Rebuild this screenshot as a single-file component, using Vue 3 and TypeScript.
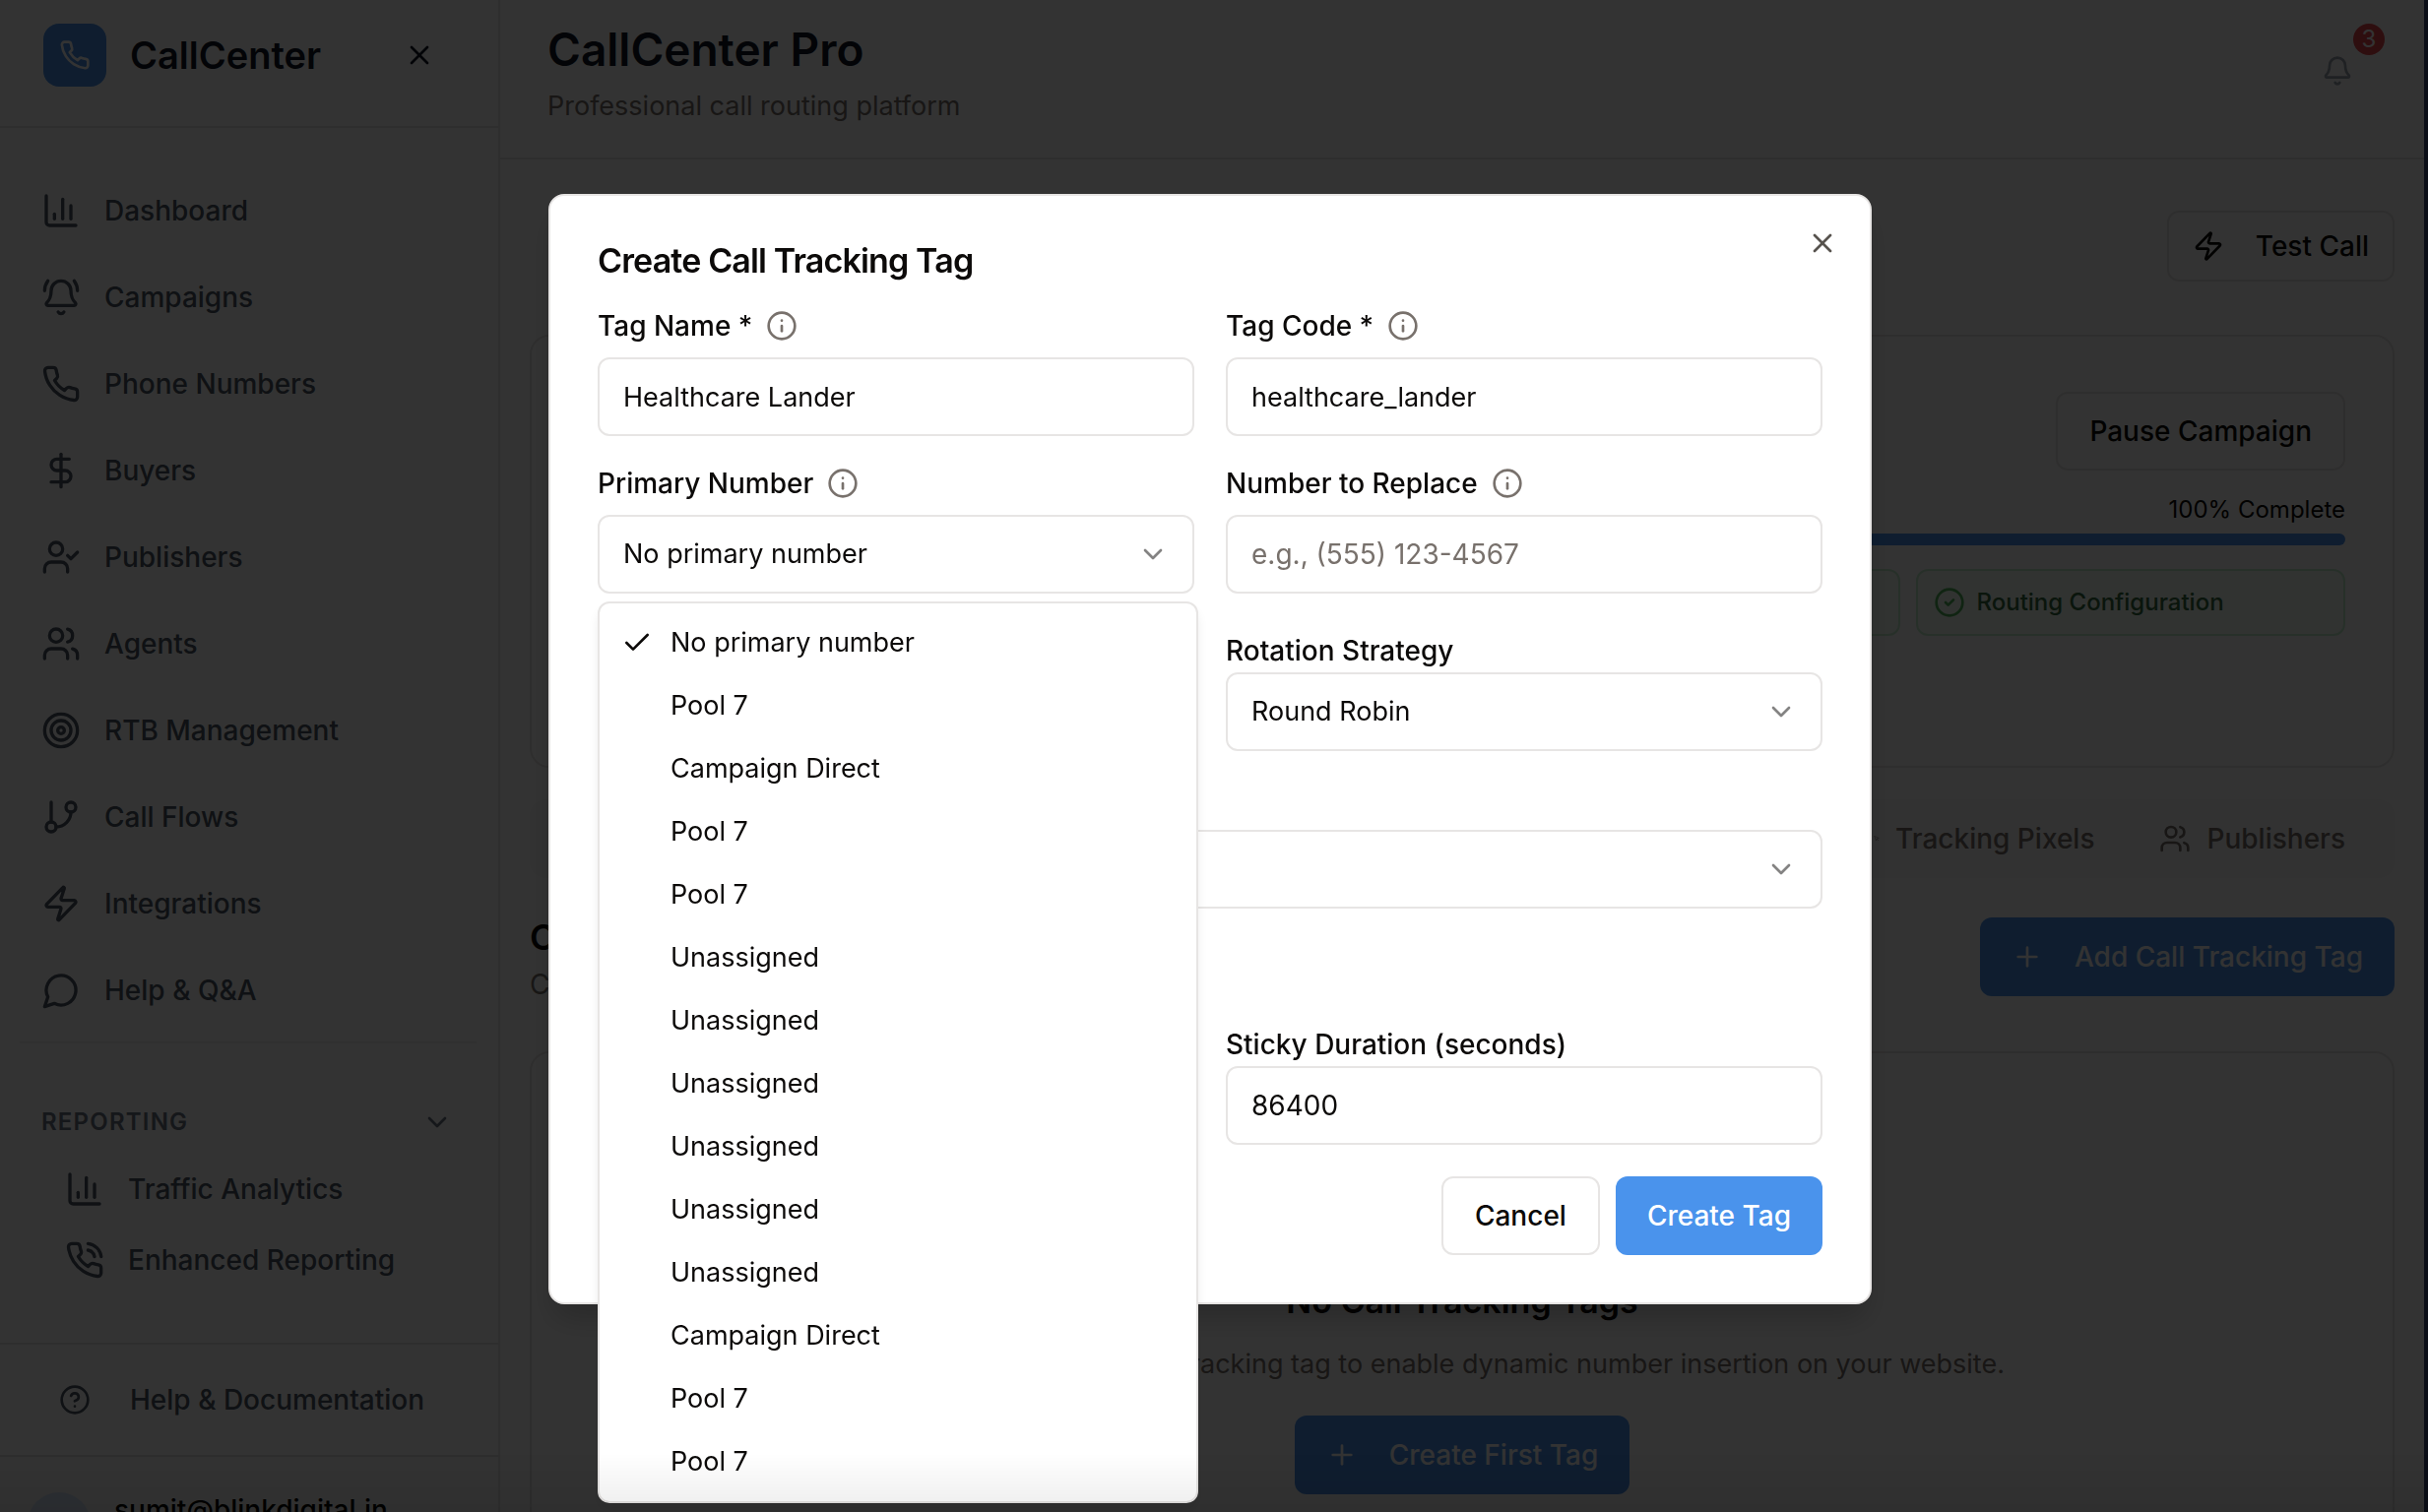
<script setup lang="ts">
import { h, ref, type FunctionalComponent } from 'vue'

type Shape = [tag: string, attrs: Record<string, string>]

const p = (d: string): Shape => ['path', { d }]
const c = (cx: number, cy: number, r: number): Shape => [
  'circle',
  { cx: String(cx), cy: String(cy), r: String(r) },
]

const handset =
  'M22 16.92v3a2 2 0 0 1-2.18 2 19.79 19.79 0 0 1-8.63-3.07 19.5 19.5 0 0 1-6-6 19.79 19.79 0 0 1-3.07-8.67A2 2 0 0 1 4.11 2h3a2 2 0 0 1 2 1.72 12.84 12.84 0 0 0 .7 2.81 2 2 0 0 1-.45 2.11L8.09 9.91a16 16 0 0 0 6 6l1.27-1.27a2 2 0 0 1 2.11-.45 12.84 12.84 0 0 0 2.81.7A2 2 0 0 1 22 16.92z'
const bellBody =
  'M3.262 15.326A1 1 0 0 0 4 17h16a1 1 0 0 0 .74-1.673C19.41 13.956 18 12.499 18 8A6 6 0 0 0 6 8c0 4.499-1.411 5.956-2.738 7.326'
const bellClapper = 'M10.268 21a2 2 0 0 0 3.464 0'

const icons: Record<string, Shape[]> = {
  phone: [p(handset)],
  phoneCall: [p(handset), p('M14.05 2a9 9 0 0 1 8 7.94'), p('M14.05 6A5 5 0 0 1 18 10')],
  close: [p('M18 6 6 18'), p('m6 6 12 12')],
  chart: [p('M3 3v16a2 2 0 0 0 2 2h16'), p('M18 17V9'), p('M13 17V5'), p('M8 17v-3')],
  bell: [p(bellBody), p(bellClapper)],
  bellRing: [p(bellBody), p(bellClapper), p('M22 8c0-2.3-.8-4.3-2-6'), p('M4 2C2.8 3.7 2 5.7 2 8')],
  dollar: [p('M12 2v20'), p('M17 5H9.5a3.5 3.5 0 0 0 0 7h5a3.5 3.5 0 0 1 0 7H6')],
  userCheck: [p('m16 11 2 2 4-4'), p('M16 21v-2a4 4 0 0 0-4-4H6a4 4 0 0 0-4 4v2'), c(9, 7, 4)],
  users: [
    p('M16 21v-2a4 4 0 0 0-4-4H6a4 4 0 0 0-4 4v2'),
    c(9, 7, 4),
    p('M22 21v-2a4 4 0 0 0-3-3.87'),
    p('M16 3.13a4 4 0 0 1 0 7.75'),
  ],
  target: [c(12, 12, 10), c(12, 12, 6), c(12, 12, 2)],
  branch: [p('M6 3v12'), c(18, 6, 3), c(6, 18, 3), p('M18 9a9 9 0 0 1-9 9')],
  zap: [
    p('M4 14a1 1 0 0 1-.78-1.63l9.9-10.2a.5.5 0 0 1 .86.46l-1.92 6.02A1 1 0 0 0 13 10h7a1 1 0 0 1 .78 1.63l-9.9 10.2a.5.5 0 0 1-.86-.46l1.92-6.02A1 1 0 0 0 11 14z'),
  ],
  message: [p('M7.9 20A9 9 0 1 0 4 16.1L2 22Z')],
  help: [c(12, 12, 10), p('M9.09 9a3 3 0 0 1 5.83 1c0 2-3 3-3 3'), p('M12 17h.01')],
  info: [c(12, 12, 10), p('M12 16v-4'), p('M12 8h.01')],
  chevron: [p('m6 9 6 6 6-6')],
  chevronUp: [p('m18 15-6-6-6 6')],
  check: [p('M20 6 9 17l-5-5')],
  checkCircle: [c(12, 12, 10), p('m9 12 2 2 4-4')],
  plus: [p('M5 12h14'), p('M12 5v14')],
  pointer: [p('M12.6 12.6 19 19'), p('M3 3l7 17 2.5-7.5L20 10z')],
}

const Icon: FunctionalComponent<{ name: string }> = (props) =>
  h(
    'svg',
    {
      viewBox: '0 0 24 24',
      fill: 'none',
      stroke: 'currentColor',
      'stroke-width': 2,
      'stroke-linecap': 'round',
      'stroke-linejoin': 'round',
      'aria-hidden': 'true',
    },
    icons[props.name].map(([tag, attrs]) => h(tag, attrs)),
  )
Icon.props = ['name']

const navItems = [
  { icon: 'chart', label: 'Dashboard' },
  { icon: 'bellRing', label: 'Campaigns' },
  { icon: 'phone', label: 'Phone Numbers' },
  { icon: 'dollar', label: 'Buyers' },
  { icon: 'userCheck', label: 'Publishers' },
  { icon: 'users', label: 'Agents' },
  { icon: 'target', label: 'RTB Management' },
  { icon: 'branch', label: 'Call Flows' },
  { icon: 'zap', label: 'Integrations' },
  { icon: 'message', label: 'Help & Q&A' },
]
const reportItems = [
  { icon: 'chart', label: 'Traffic Analytics' },
  { icon: 'phoneCall', label: 'Enhanced Reporting' },
]
const numberOptions = [
  'No primary number',
  'Pool 7',
  'Campaign Direct',
  'Pool 7',
  'Pool 7',
  ...Array<string>(6).fill('Unassigned'),
  'Campaign Direct',
  'Pool 7',
  'Pool 7',
]

const tagName = ref('Healthcare Lander')
const tagCode = ref('healthcare_lander')
const replaceNumber = ref('')
const stickyDuration = ref('86400')
const selectedNumber = ref(0)
</script>

<template>
  <div class="app">
    <aside class="sidebar">
      <div class="brand">
        <span class="brand-logo"><Icon name="phone" class="icon" /></span>
        <span class="brand-name">CallCenter</span>
        <button class="icon-button" type="button" aria-label="Close sidebar"><Icon name="close" class="icon" /></button>
      </div>
      <nav class="nav" aria-label="Main">
        <a v-for="item in navItems" :key="item.label" href="#" class="nav-link">
          <Icon :name="item.icon" class="icon-lg" />{{ item.label }}
        </a>
      </nav>
      <section class="reports">
        <button class="reports-toggle" type="button">REPORTING<Icon name="chevron" class="icon" /></button>
        <a v-for="item in reportItems" :key="item.label" href="#" class="report-link">
          <Icon :name="item.icon" class="icon-lg" />{{ item.label }}
        </a>
      </section>
      <div class="docs">
        <a href="#" class="docs-link"><Icon name="help" class="icon" />Help &amp; Documentation</a>
      </div>
      <div class="account">
        <span class="avatar"></span>
        <span class="account-mail">sumit@blinkdigital.in</span>
        <Icon name="chevronUp" class="icon account-arrow" />
      </div>
    </aside>

    <div class="main">
      <header class="topbar">
        <div>
          <h1>CallCenter Pro</h1>
          <p>Professional call routing platform</p>
        </div>
        <button class="bell" type="button" aria-label="Notifications">
          <Icon name="bell" class="icon" />
          <span class="badge">3</span>
        </button>
      </header>

      <main class="content">
        <div class="actions">
          <button class="button outline small" type="button"><Icon name="zap" class="icon" />Test Call</button>
        </div>

        <section class="card progress-card">
          <div class="actions">
            <button class="button outline" type="button">Pause Campaign</button>
          </div>
          <p class="complete">100% Complete</p>
          <div class="bar"></div>
          <div class="steps">
            <div class="step"></div>
            <div class="step"></div>
            <div class="step"></div>
            <div class="step"><Icon name="checkCircle" class="icon" />Routing Configuration</div>
          </div>
        </section>

        <div class="tabs">
          <button class="tab" type="button"><Icon name="pointer" class="pointer" />Tracking Pixels</button>
          <button class="tab" type="button"><Icon name="users" class="icon" />Publishers</button>
        </div>

        <div class="section-head">
          <div>
            <h2>Call Tracking Tags</h2>
            <p>Configure tags</p>
          </div>
          <button class="button primary" type="button"><Icon name="plus" class="icon" />Add Call Tracking Tag</button>
        </div>

        <section class="card empty">
          <h3>No Call Tracking Tags</h3>
          <p>Create your first call tracking tag to enable dynamic number insertion on your website.</p>
          <button class="button primary" type="button"><Icon name="plus" class="icon" />Create First Tag</button>
        </section>
      </main>
    </div>

    <div class="scrim">
      <form class="dialog" role="dialog" aria-modal="true" aria-labelledby="dialog-title" @submit.prevent>
        <button class="icon-button dialog-close" type="button" aria-label="Close"><Icon name="close" class="icon" /></button>
        <h2 id="dialog-title">Create Call Tracking Tag</h2>

        <div class="fields">
          <div class="field">
            <div class="label-row"><label for="tag-name">Tag Name *</label><Icon name="info" class="icon" /></div>
            <input id="tag-name" v-model="tagName" class="control" type="text" />
          </div>
          <div class="field">
            <div class="label-row"><label for="tag-code">Tag Code *</label><Icon name="info" class="icon" /></div>
            <input id="tag-code" v-model="tagCode" class="control" type="text" />
          </div>
          <div class="field">
            <div class="label-row"><label for="primary">Primary Number</label><Icon name="info" class="icon" /></div>
            <div class="select">
              <select id="primary" v-model="selectedNumber" class="control">
                <option v-for="(name, i) in numberOptions" :key="i" :value="i">{{ name }}</option>
              </select>
              <Icon name="chevron" class="icon arrow" />
              <ul class="menu" role="listbox" aria-label="Primary Number">
                <li
                  v-for="(name, i) in numberOptions"
                  :key="i"
                  class="option"
                  role="option"
                  :aria-selected="i === selectedNumber"
                  @click="selectedNumber = i"
                >
                  <span class="mark"><Icon v-if="i === selectedNumber" name="check" class="icon" /></span>{{ name }}
                </li>
              </ul>
            </div>
          </div>
          <div class="field">
            <div class="label-row"><label for="replace">Number to Replace</label><Icon name="info" class="icon" /></div>
            <input id="replace" v-model="replaceNumber" class="control" type="text" placeholder="e.g., (555) 123-4567" />
          </div>
          <div class="field right">
            <label class="plain-label" for="rotation">Rotation Strategy</label>
            <div class="select">
              <select id="rotation" class="control"><option>Round Robin</option></select>
              <Icon name="chevron" class="icon arrow" />
            </div>
          </div>
        </div>

        <div class="select wide">
          <select class="control" aria-label="Number pool"></select>
          <Icon name="chevron" class="icon arrow" />
        </div>

        <div class="fields sticky">
          <div class="field right">
            <label class="plain-label" for="sticky">Sticky Duration (seconds)</label>
            <input id="sticky" v-model="stickyDuration" class="control" type="text" inputmode="numeric" />
          </div>
        </div>

        <div class="dialog-footer">
          <button class="button outline" type="button">Cancel</button>
          <button class="button primary" type="submit">Create Tag</button>
        </div>
      </form>
      <div class="bottom-shade"></div>
    </div>
  </div>
</template>

<style>
body {
  margin: 0;
  background: #ffffff;
}
</style>

<style scoped>
* {
  box-sizing: border-box;
}

.app {
  display: flex;
  height: 100vh;
  overflow: hidden;
  background: #ffffff;
  color: #0c0a09;
  font-family: Inter, 'Liberation Sans', sans-serif;
  font-size: 28px;
  line-height: 40px;
}

h1,
h2,
h3,
p,
ul {
  margin: 0;
  padding: 0;
}

button,
input,
select {
  font: inherit;
  color: inherit;
}

button {
  border: 0;
  background: none;
  padding: 0;
}

a {
  color: inherit;
  text-decoration: none;
}

.icon {
  width: 32px;
  height: 32px;
  flex: none;
}

.icon-lg {
  width: 40px;
  height: 40px;
  flex: none;
}

.icon-button {
  display: flex;
}

/* Sidebar */
.sidebar {
  width: 508px;
  flex: none;
  border-right: 2px solid #e7e5e4;
  color: #4b5563;
  font-weight: 500;
}

.brand {
  display: flex;
  align-items: center;
  height: 130px;
  padding: 0 64px 16px 44px;
  border-bottom: 2px solid #e7e5e4;
  color: #111827;
}

.brand-logo {
  display: grid;
  place-items: center;
  width: 64px;
  height: 64px;
  border-radius: 16px;
  background: #4a93ec;
  color: #ffffff;
}

.brand-name {
  flex: 1;
  margin-left: 24px;
  font-size: 38px;
  font-weight: 600;
}

.nav {
  display: flex;
  flex-direction: column;
  margin: 0 22px 0 20px;
  padding: 40px 0 8px;
  border-bottom: 2px solid #f0efee;
}

.nav-link {
  display: flex;
  align-items: center;
  gap: 24px;
  height: 88px;
  padding-left: 22px;
}

.reports {
  padding: 56px 46px 48px 42px;
}

.reports-toggle {
  display: flex;
  align-items: center;
  justify-content: space-between;
  width: 100%;
  height: 48px;
  margin-bottom: 8px;
  color: #6b7280;
  font-size: 24px;
  font-weight: 600;
  letter-spacing: 0.05em;
}

.report-link {
  display: flex;
  align-items: center;
  gap: 24px;
  height: 72px;
  padding-left: 24px;
}

.docs {
  border-top: 2px solid #e7e5e4;
  border-bottom: 2px solid #e7e5e4;
}

.docs-link {
  display: flex;
  align-items: center;
  gap: 40px;
  height: 112px;
  padding-left: 60px;
}

.account {
  display: flex;
  align-items: center;
  gap: 24px;
  padding: 36px 48px 32px 28px;
  color: #0c0a09;
}

.avatar {
  width: 64px;
  height: 64px;
  border-radius: 50%;
  background: #dbeafe;
}

.account-mail {
  flex: 1;
  margin-top: -28px;
}

/* Page */
.main {
  flex: 1;
  min-width: 0;
  margin-right: 4px;
}

.topbar {
  display: flex;
  justify-content: space-between;
  height: 162px;
  padding: 20px 72px 0 48px;
  border-bottom: 2px solid #e7e5e4;
}

.topbar h1 {
  color: #111827;
  font-size: 46px;
  line-height: 60px;
  font-weight: 600;
}

.topbar p {
  margin-top: 8px;
  color: #78716c;
  font-size: 27px;
}

.bell {
  position: relative;
  align-self: flex-start;
  display: flex;
  margin-top: 36px;
  color: #9ca3af;
}

.badge {
  position: absolute;
  top: -32px;
  left: 32px;
  width: 32px;
  height: 32px;
  border-radius: 50%;
  background: #e5484d;
  color: #ffffff;
  font-size: 24px;
  line-height: 32px;
  text-align: center;
}

.content {
  padding: 52px 30px 0;
}

.actions {
  display: flex;
  justify-content: flex-end;
}

.button {
  display: inline-flex;
  align-items: center;
  justify-content: center;
  gap: 32px;
  height: 80px;
  padding: 0 32px;
  border-radius: 12px;
  font-weight: 500;
  white-space: nowrap;
}

.outline {
  border: 2px solid #e7e5e4;
  background: #ffffff;
}

.small {
  height: 72px;
  padding: 0 24px;
}

.primary {
  background: #4a93ec;
  color: #ffffff;
}

.card {
  border: 2px solid #e7e5e4;
  border-radius: 20px;
}

.progress-card {
  margin-top: 54px;
  padding: 56px 48px 132px;
}

.complete {
  margin-top: 20px;
  font-size: 24px;
  text-align: right;
}

.bar {
  height: 12px;
  margin-top: 4px;
  border-radius: 6px;
  background: #4a93ec;
}

.steps {
  display: grid;
  grid-template-columns: repeat(4, 1fr);
  gap: 16px;
  margin-top: 24px;
}

.step {
  display: flex;
  align-items: center;
  gap: 12px;
  height: 68px;
  padding: 0 16px;
  border: 2px solid #c4edcd;
  border-radius: 12px;
  background: #f2fcf4;
  color: #33693f;
  font-size: 24px;
  font-weight: 500;
}

.step .icon {
  color: #50b45a;
}

.tabs {
  display: flex;
  justify-content: flex-end;
  gap: 66px;
  height: 80px;
  margin-top: 32px;
  padding-right: 50px;
  border-radius: 16px;
  background: #fafaf9;
  color: #78716c;
}

.tab {
  display: flex;
  align-items: center;
  gap: 16px;
  font-weight: 500;
}

.pointer {
  width: 6px;
  height: 6px;
}

.section-head {
  display: flex;
  justify-content: space-between;
  margin-top: 40px;
}

.section-head h2 {
  font-size: 36px;
  font-weight: 600;
}

.section-head p {
  margin-top: 8px;
  color: #78716c;
}

.empty {
  display: flex;
  flex-direction: column;
  align-items: center;
  margin-top: 48px;
  padding: 232px 48px 96px;
}

.empty h3 {
  font-size: 34px;
  font-weight: 600;
}

.empty p {
  margin: 24px 0 32px;
  color: #78716c;
  font-size: 27px;
}

/* Dialog */
.scrim {
  position: fixed;
  inset: 0;
  display: grid;
  place-items: center;
  padding: 0 4px 14px 0;
  border-right: 4px solid #0b0e17;
  background: rgba(0, 0, 0, 0.8);
}

.dialog {
  position: relative;
  width: 1344px;
  max-width: 100%;
  padding: 48px;
  border: 2px solid #e7e5e4;
  border-radius: 16px;
  background: #ffffff;
  box-shadow: 0 20px 30px -6px rgba(0, 0, 0, 0.2);
}

.dialog-close {
  position: absolute;
  top: 32px;
  right: 32px;
  color: #57534e;
}

.dialog h2 {
  font-size: 34px;
  line-height: 36px;
  font-weight: 600;
  letter-spacing: -0.025em;
}

.fields {
  display: grid;
  grid-template-columns: 1fr 1fr;
  gap: 32px;
  margin-top: 32px;
}

.right {
  grid-column: 2;
}

.label-row {
  display: flex;
  align-items: center;
  gap: 14px;
  height: 32px;
  margin-bottom: 16px;
  font-weight: 500;
}

.label-row .icon {
  color: #78716c;
}

.plain-label {
  display: block;
  height: 48px;
  padding-top: 6px;
  font-weight: 500;
}

.control {
  display: block;
  width: 100%;
  height: 80px;
  padding: 0 24px;
  border: 2px solid #e7e5e4;
  border-radius: 12px;
  background: #ffffff;
  font-size: 27px;
  outline: none;
  appearance: none;
}

.control::placeholder {
  color: #78716c;
  opacity: 1;
}

#replace,
#sticky {
  font-size: 28px;
}

.select {
  position: relative;
}

.wide {
  margin-top: 80px;
}

.sticky {
  margin-top: 112px;
}

.arrow {
  position: absolute;
  top: 24px;
  right: 26px;
  opacity: 0.5;
  pointer-events: none;
}

.menu {
  position: absolute;
  top: 88px;
  left: 0;
  right: -4px;
  z-index: 1;
  padding: 8px;
  border: 2px solid #e7e5e4;
  border-radius: 12px;
  background: #ffffff;
  box-shadow: 0 8px 12px -2px rgba(0, 0, 0, 0.1);
  font-size: 27px;
  list-style: none;
}

.option {
  display: flex;
  align-items: center;
  gap: 18px;
  height: 64px;
  padding-left: 14px;
}

.mark {
  display: flex;
  width: 32px;
}

.dialog-footer {
  display: flex;
  justify-content: flex-end;
  gap: 16px;
  margin-top: 32px;
}

.bottom-shade {
  position: fixed;
  inset: auto 0 0;
  z-index: 2;
  height: 60px;
  background: linear-gradient(rgba(0, 0, 0, 0), rgba(0, 0, 0, 0.07));
  pointer-events: none;
}
</style>
